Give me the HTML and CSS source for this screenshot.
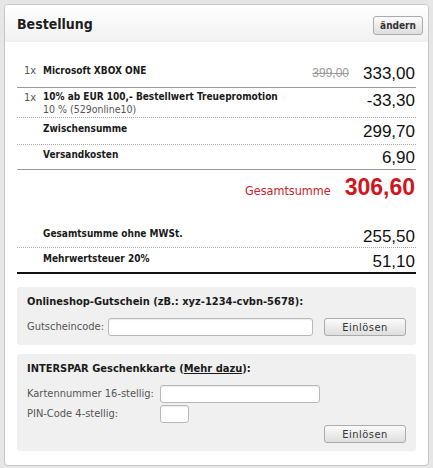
FILE: index.html
```html
<!DOCTYPE html>
<html lang="de">
<head>
<meta charset="utf-8">
<title>Bestellung</title>
<link rel="stylesheet" href="styles.css">
</head>
<body>
<div class="panel">
  <div class="panel-head">
    <h1 class="title">Bestellung</h1>
    <button class="btn btn-edit" type="button">ändern</button>
  </div>
  <div class="panel-body">
    <div class="row row-item line-solid">
      <span class="qty">1x</span>
      <div class="desc"><strong>Microsoft XBOX ONE</strong></div>
      <span class="old">399,00</span>
      <span class="amt">333,00</span>
    </div>
    <div class="row row-promo line-dotted">
      <span class="qty">1x</span>
      <div class="desc">
        <strong>10% ab EUR 100,- Bestellwert Treuepromotion</strong>
        <span class="sub">10 % (529online10)</span>
      </div>
      <span class="amt">-33,30</span>
    </div>
    <div class="row row-sum line-dotted">
      <div class="desc"><strong>Zwischensumme</strong></div>
      <span class="amt">299,70</span>
    </div>
    <div class="row row-sum row-ship line-solid">
      <div class="desc"><strong>Versandkosten</strong></div>
      <span class="amt">6,90</span>
    </div>
    <div class="total">
      <span class="total-label">Gesamtsumme</span>
      <span class="total-amt">306,60</span>
    </div>
    <div class="row row-sum line-dotted row-net">
      <div class="desc"><strong>Gesamtsumme ohne MWSt.</strong></div>
      <span class="amt">255,50</span>
    </div>
    <div class="row row-sum line-strong">
      <div class="desc"><strong>Mehrwertsteuer 20%</strong></div>
      <span class="amt">51,10</span>
    </div>

    <form class="box box-voucher">
      <div class="box-title">Onlineshop-Gutschein (zB.: xyz-1234-cvbn-5678):</div>
      <div class="voucher-line">
        <label class="field-label" for="code">Gutscheincode:</label>
        <input class="input input-code" id="code" type="text">
        <button class="btn btn-redeem" type="button">Einlösen</button>
      </div>
    </form>

    <form class="box box-card">
      <div class="box-title">INTERSPAR Geschenkkarte (<a class="more" href="#">Mehr dazu</a>):</div>
      <div class="card-grid">
        <label class="field-label" for="card">Kartennummer 16-stellig:</label>
        <input class="input input-card" id="card" type="text">
        <label class="field-label" for="pin">PIN-Code 4-stellig:</label>
        <input class="input input-pin" id="pin" type="text">
      </div>
      <div class="card-actions">
        <button class="btn btn-redeem" type="button">Einlösen</button>
      </div>
    </form>
  </div>
</div>
</body>
</html>
```

FILE: styles.css
```css
* { box-sizing: border-box; }

html, body {
  margin: 0;
  padding: 0;
}

body {
  background: #e6e6e6;
  padding: 4px 4px 2px 4px;
  font-family: "DejaVu Sans Condensed", "DejaVu Sans", sans-serif;
  font-size: 11px;
  color: #1a1a1a;
}

.panel {
  width: 425px;
  height: 462px;
  background: #fff;
  border: 1px solid #c6c6c6;
  border-radius: 4px;
  overflow: hidden;
}

.panel-head {
  height: 37px;
  display: flex;
  align-items: center;
  justify-content: space-between;
  padding: 0 5px 0 12px;
  background: linear-gradient(#ffffff, #f1f1f1);
}

.title {
  margin: 0;
  font-size: 14px;
  font-weight: bold;
  color: #1e1e1e;
  padding-top: 1px;
}

.btn {
  font-family: "DejaVu Sans Condensed", "DejaVu Sans", sans-serif;
  font-size: 11px;
  color: #333;
  background: linear-gradient(#fbfbfb, #dedede);
  border: 1px solid #ababab;
  border-radius: 3px;
  padding: 0;
  cursor: pointer;
}

.btn-edit {
  width: 50px;
  height: 19px;
  font-weight: bold;
  font-size: 10px;
  margin-top: 3px;
}

.panel-body {
  padding: 18px 12px 10px 12px;
}

.row {
  display: flex;
  align-items: flex-start;
  padding: 4px 1px 3px 7px;
}

.line-solid { border-bottom: 1px solid #9a9a9a; }
.line-dotted { border-bottom: 1px dotted #a8a8a8; }
.line-strong { border-bottom: 2px solid #111; }

.qty {
  width: 19px;
  line-height: 14px;
  color: #555;
}

.desc {
  flex: 1;
  line-height: 14px;
  display: flex;
  flex-direction: column;
}

.desc strong {
  font-weight: bold;
  font-size: 10px;
}

.sub {
  color: #555;
  line-height: 12px;
  font-size: 10.5px;
}

.old {
  font-family: "Liberation Sans", Arial, sans-serif;
  font-size: 12px;
  color: #999;
  text-decoration: line-through;
  line-height: 18px;
  margin-right: 14px;
}

.amt {
  font-family: "Liberation Sans", Arial, sans-serif;
  font-size: 17px;
  line-height: 20px;
  color: #111;
}

.row-promo {
  padding-top: 3px;
  padding-bottom: 2px;
}
.row-promo .desc { line-height: 12px; }

.row-sum {
  padding: 4px 1px 2px 26px;
}

.row-ship {
  padding-top: 3px;
  padding-bottom: 1px;
}

.total {
  display: flex;
  justify-content: flex-end;
  align-items: baseline;
  gap: 14px;
  padding: 4px 1px 23px 0;
}

.total-label {
  font-size: 12.5px;
  color: #cc2229;
}

.total-amt {
  font-family: "Liberation Sans", Arial, sans-serif;
  font-size: 23px;
  line-height: 26px;
  font-weight: bold;
  color: #d0161e;
}

.row-net { padding-bottom: 0; }
.line-strong { padding-bottom: 0; }

.box {
  margin: 13px 0 0 0;
  background: #f0f0f0;
  border-radius: 3px;
  padding: 8px 10px 9px 10px;
}

.box-card {
  margin-top: 9px;
  padding-bottom: 8px;
}

.box-title {
  font-weight: bold;
  font-size: 11px;
  line-height: 14px;
  color: #1a1a1a;
}

.more {
  color: #1a1a1a;
  text-decoration: underline;
}

.field-label {
  color: #555;
  line-height: 14px;
}

.voucher-line {
  display: flex;
  align-items: center;
  margin-top: 9px;
}

.input {
  height: 18px;
  background: #fff;
  border: 1px solid #b9b9b9;
  border-radius: 3px;
  box-shadow: inset 0 1px 1px rgba(0,0,0,0.08);
  padding: 0 3px;
  font: inherit;
}

.input-code {
  width: 205px;
  margin-left: 4px;
}

.btn-redeem {
  width: 82px;
  height: 18px;
  margin-left: auto;
  letter-spacing: 0.5px;
}

.card-grid {
  display: grid;
  grid-template-columns: 133px auto;
  justify-content: start;
  align-items: center;
  row-gap: 2px;
  margin-top: 9px;
}

.input-card { width: 160px; }
.input-pin { width: 29px; }

.card-actions {
  display: flex;
  justify-content: flex-end;
  margin-top: 2px;
}
```
